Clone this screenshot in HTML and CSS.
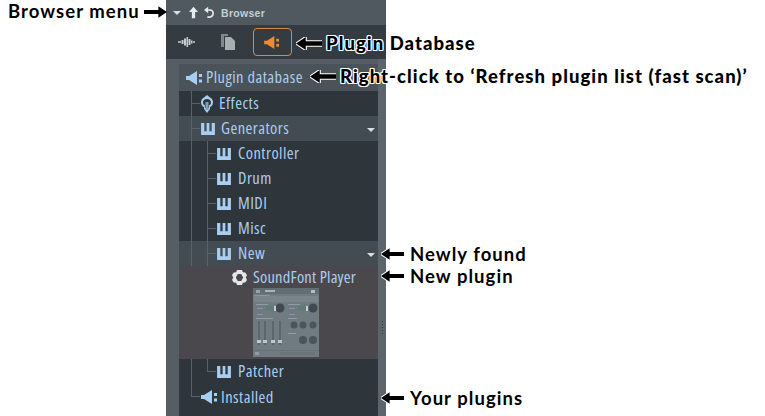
FILE: index.html
```html
<!DOCTYPE html>
<html lang="en">
<head>
<meta charset="utf-8">
<title>Browser plugin database</title>
<link rel="stylesheet" href="styles.css">
</head>
<body>
<svg class="defs" width="0" height="0" aria-hidden="true">
  <defs>
    <symbol id="plug" viewBox="0 0 18 14"><path d="M0 5H3L11 0V14L3 9H0Z"/><rect x="13" y="3" width="3" height="3"/><rect x="13" y="8.500" width="3" height="3"/></symbol>
    <symbol id="keys" viewBox="0 0 15 13"><path d="M0 0H3.500V9H6V0H9V9H11.500V0H15V13H0Z"/></symbol>
    <symbol id="arrow" viewBox="0 0 24 12"><path d="M0 6 9 0V4H24V8H9V12Z"/></symbol>
  </defs>
</svg>
<main class="panel">
  <header class="titlebar">
    <span class="caret title-caret"></span>
    <svg class="tb-icon" width="9" height="13" viewBox="0 0 11 14"><path d="M5.500 0 11 6.500H7.500V14H3.500V6.500H0Z"/></svg>
    <svg class="tb-icon" width="10" height="13" viewBox="0 0 12 14"><path d="M5 0V3H7.500C10 3 12 5 12 8S10 13.500 6.500 13.500H4V11.500H6.500C8.500 11.500 10 10 10 8S8.500 5 7 5H5V8L0 4Z"/></svg>
    <span class="title-text">Browser</span>
  </header>
  <nav class="tabs">
    <svg class="tab-wave" width="17" height="10" viewBox="0 0 17 10"><path d="M0 4.200H3V5.800H0ZM3.500 3H5.500V7H3.500ZM6 1.500H8V8.500H6ZM8.500 0H10V10H8.500ZM10.500 2H12.500V8H10.500ZM13 3.500H14.500V6.500H13ZM15 4.200H17V5.800H15Z"/></svg>
    <svg class="tab-files" width="14" height="16" viewBox="0 0 14 16"><path class="back" d="M0 0H7V2H3V13H0Z"/><path class="front" d="M4 3H10L14 7V16H4Z"/></svg>
    <div class="tab-active"><svg class="i-plug-o" width="17" height="13"><use href="#plug"/></svg></div>
  </nav>
  <div class="body">
    <div class="gutter"></div>
    <div class="tree">
      <div class="row root"><svg class="i-plug" width="18" height="14"><use href="#plug"/></svg><span>Plugin database</span></div>
      <div class="row dark l1 g1 branch1"><svg class="i-fx" width="12" height="18" viewBox="0 0 12 18"><path d="M6 0 9 2.500C11 3.500 12 5 12 7.500 12 10 10.500 11.500 9 12V14L6 18 3 14V12C1.500 11.500 0 10 0 7.500 0 5 1 3.500 3 2.500Z"/><path class="fx-in" d="M6 4C8.500 4 10 5.500 10 7.500 10 9 9 10 8 10.500V13H4V10.500C3 10 2 9 2 7.500 2 5.500 3.500 4 6 4Z"/><rect class="fx-core" x="4.500" y="7" width="3" height="8"/></svg><span>Effects</span></div>
      <div class="row light l1 g1 branch1"><svg class="i-keys" width="14" height="12"><use href="#keys"/></svg><span>Generators</span><i class="caret"></i></div>
      <div class="row dark l2 g2 branch2"><svg class="i-keys" width="14" height="12"><use href="#keys"/></svg><span>Controller</span></div>
      <div class="row dark l2 g2 branch2"><svg class="i-keys" width="14" height="12"><use href="#keys"/></svg><span>Drum</span></div>
      <div class="row dark l2 g2 branch2"><svg class="i-keys" width="14" height="12"><use href="#keys"/></svg><span>MIDI</span></div>
      <div class="row dark l2 g2 branch2"><svg class="i-keys" width="14" height="12"><use href="#keys"/></svg><span>Misc</span></div>
      <div class="row light l2 g2 branch2"><svg class="i-keys" width="14" height="12"><use href="#keys"/></svg><span>New</span><i class="caret"></i></div>
      <section class="selected">
        <div class="sf-name"><svg class="i-gear" width="15" height="15" viewBox="0 0 15 15"><path fill-rule="evenodd" d="M5 0H10L10.800 2.200 13.200 2.500 15 5 13.800 7.500 15 10 13.200 12.500 10.800 12.800 10 15H5L4.200 12.800 1.800 12.500 0 10 1.200 7.500 0 5 1.800 2.500 4.200 2.200ZM5.800 4 3.800 7.500 5.800 11H9.200L11.200 7.500 9.200 4Z"/></svg><span>SoundFont Player</span></div>
        <svg class="thumb" width="66" height="69" viewBox="0 0 66 69">
          <rect width="66" height="69" fill="#6f7b80"/>
          <rect y="0" width="66" height="6" fill="#636e72"/>
          <rect x="3" y="2" width="4" height="3" fill="#98a2a6"/><rect x="12" y="2" width="10" height="2" fill="#aab3b6"/><rect x="58" y="2" width="4" height="3" fill="#b5bdc0"/>
          <rect x="1" y="8" width="64" height="6" fill="#798589"/><rect x="1" y="7" width="16" height="1" fill="#8c969a"/>
          <rect x="3" y="16" width="12" height="1" fill="#929ca0"/><rect x="35" y="16" width="12" height="1" fill="#929ca0"/>
          <rect x="4" y="20" width="6" height="1" fill="#8c969a"/><rect x="36" y="20" width="6" height="1" fill="#8c969a"/>
          <rect x="13" y="18" width="8" height="5" fill="#5f7c75"/><rect x="45" y="18" width="8" height="5" fill="#5f7c75"/>
          <circle cx="27" cy="20" r="4.500" fill="#414a50"/><circle cx="60" cy="20" r="4.500" fill="#414a50"/><rect x="21" y="18" width="2" height="5" fill="#c8ced0"/><rect x="53" y="18" width="2" height="5" fill="#c8ced0"/>
          <rect x="4" y="26" width="6" height="1" fill="#8c969a"/><rect x="36" y="26" width="6" height="1" fill="#8c969a"/>
          <rect x="3" y="30" width="17" height="1" fill="#929ca0"/><rect x="35" y="30" width="9" height="1" fill="#929ca0"/><rect x="35" y="45" width="8" height="1" fill="#929ca0"/>
          <g fill="#4a545a"><rect x="5.500" y="33" width="1" height="24"/><rect x="11.500" y="33" width="1" height="24"/><rect x="19.500" y="33" width="1" height="24"/><rect x="26.500" y="33" width="1" height="24"/></g>
          <g fill="#bfc6c9"><rect x="4" y="52" width="4" height="3"/><rect x="10" y="52" width="4" height="3"/><rect x="18" y="52" width="4" height="3"/><rect x="25" y="52" width="4" height="3"/></g>
          <g fill="#4a545a"><circle cx="41" cy="37" r="3.500"/><circle cx="50" cy="37" r="3.500"/><circle cx="60" cy="37" r="3.500"/><circle cx="50" cy="52" r="4"/><circle cx="60" cy="52" r="4"/></g>
          <rect y="62" width="66" height="1" fill="#667277"/><rect x="27" y="64" width="35" height="3" fill="#687478"/><rect x="2" y="64" width="4" height="3" fill="#929ca0"/>
        </svg>
      </section>
      <div class="row dark l2 g1 branch2 end2"><svg class="i-keys" width="14" height="12"><use href="#keys"/></svg><span>Patcher</span></div>
      <div class="row dark l1b branch1 end1"><svg class="i-plug" width="18" height="14"><use href="#plug"/></svg><span>Installed</span></div>
      <div class="foot"></div>
    </div>
    <div class="scroll"><b></b><b></b><b></b><b></b><b></b></div>
  </div>
</main>

<p class="note plain n-menu">Browser menu</p>
<svg class="arrow a-menu" width="23" height="12"><use href="#arrow"/></svg>
<p class="note halo n-db">Plugin Database</p>
<svg class="arrow halo-a a-db" width="26" height="13"><use href="#arrow"/></svg>
<p class="note halo n-right">Right-click to ‘Refresh plugin list (fast scan)’</p>
<svg class="arrow halo-a a-right" width="26" height="13"><use href="#arrow"/></svg>
<p class="note plain n-found">Newly found</p>
<svg class="arrow halo-a a-found" width="23" height="12"><use href="#arrow"/></svg>
<p class="note plain n-new">New plugin</p>
<svg class="arrow halo-a a-new" width="23" height="12"><use href="#arrow"/></svg>
<p class="note plain n-yours">Your plugins</p>
<svg class="arrow halo-a a-yours" width="23" height="12"><use href="#arrow"/></svg>
</body>
</html>
```
FILE: styles.css
```css
* { box-sizing: border-box; }
html, body { margin: 0; height: 416px; overflow: hidden; background: #fff; }
body { position: relative; font-family: "Open Sans", sans-serif; }
.defs { position: absolute; }

.panel { width: 220px; height: 416px; margin-left: 166px; background: #555e64; display: flex; flex-direction: column; }
.titlebar { height: 25px; display: flex; align-items: center; background: #50595f; padding: 0 0 0 7px; flex: none; }
.tb-icon { fill: #e8ebec; }
.title-caret { margin-right: 8px; }
.tb-icon + .tb-icon { margin-left: 6px; }
.title-text { margin-left: 7px; font: 700 10.5px "Liberation Sans", sans-serif; letter-spacing: .3px; color: #c6ced2; }
.caret { width: 0; height: 0; border-left: 4px solid transparent; border-right: 4px solid transparent; border-top: 4px solid #d9dee0; display: block; }

.tabs { height: 34px; flex: none; background: #343c42; display: flex; align-items: center; padding-left: 12px; }
.tab-wave { fill: #c3cbcf; }
.tab-files { margin-left: 26px; }
.tab-files .back { fill: #7f888c; }
.tab-files .front { fill: #a9aeb0; }
.tab-active { width: 39px; height: 28px; margin-left: 18px; border: 1.5px solid #d5894a; border-radius: 4px; display: flex; align-items: center; justify-content: center; }
.i-plug-o { fill: #f08a32; }

.body { flex: 1; display: flex; min-height: 0; }
.gutter { width: 13px; background: #555e64; flex: none; }
.tree { width: 199px; padding-top: 5px; flex: none; display: flex; flex-direction: column; }
.scroll { flex: 1; background: #5c656b; display: flex; flex-direction: column; align-items: center; gap: 2px; padding-top: 262px; }
.scroll b { width: 1px; height: 1px; background: #343c42; }

.row { position: relative; height: 25px; flex: none; display: flex; align-items: center; gap: 6px; color: #a9cdf0; font-size: 16.500px; font-stretch: 75%; letter-spacing: .45px; white-space: nowrap; }
.row > span, .sf-name > span { margin-bottom: 2px; }
.row svg { fill: #a9cdf0; flex: none; }
.i-fx .fx-in { fill: #2e363c; }
.i-fx .fx-core { fill: #7f9fc0; }
.root { height: 27px; padding-left: 7px; background: #4a5359; gap: 2px; }
.root > span { margin-bottom: 3px; }
.dark { background: #2e363c; }
.light { background: #434c52; }
.l1 { padding-left: 22px; }
.l1b { padding-left: 22px; gap: 2px; }
.l1b > span { margin-bottom: 0; }
.l2 { padding-left: 38px; gap: 7px; }
.row .caret { position: absolute; right: 3px; top: 12px; }

.g1::before, .g2::before, .end1::before, .end2::before { content: ""; position: absolute; left: 12px; top: 0; bottom: 0; width: 1px; background: #57626a; }
.g2::after { content: ""; position: absolute; left: 28px; top: 0; bottom: 0; width: 1px; background: #57626a; }
.end1::before { bottom: 12px; }
.end2::after { content: ""; position: absolute; left: 28px; top: 0; height: 13px; width: 1px; background: #57626a; }
.branch1 > span:first-of-type::before, .branch2 > span:first-of-type::before { content: ""; position: absolute; top: 12px; height: 1px; background: #57626a; }
.branch1 > span:first-of-type::before { left: 12px; width: 9px; }
.branch2 > span:first-of-type::before { left: 28px; width: 9px; }

.selected { height: 93px; flex: none; background: #4b484d; display: flex; flex-direction: column; align-items: flex-start; padding: 0 0 0 53px; }
.sf-name { height: 22px; flex: none; display: flex; align-items: center; gap: 6px; color: #a9cdf0; font-size: 16.500px; font-stretch: 75%; letter-spacing: .2px; white-space: nowrap; }
.i-gear { fill: #e4e7e8; flex: none; }
.thumb { margin: 0 0 0 21px; flex: none; filter: blur(.6px); }
.foot { flex: 1; background: #2e363c; }

.note { position: absolute; margin: 0; white-space: nowrap; font-family: "Lato", sans-serif; font-weight: 700; font-size: 18.500px; letter-spacing: 1.05px; line-height: 22px; color: #000; }
.halo { font-weight: 900; text-shadow: 1px 0 #fff, -1px 0 #fff, 0 1px #fff, 0 -1px #fff, 1px 1px #fff, -1px -1px #fff, 1px -1px #fff, -1px 1px #fff; }
.arrow { position: absolute; fill: #000; overflow: visible; }
.a-menu { transform: scaleX(-1); }
.halo-a { stroke: #fff; stroke-width: 2px; paint-order: stroke; }
.n-menu { left: 8px; top: 0; }
.a-menu { left: 144px; top: 6px; }
.n-db { left: 326px; top: 32px; }
.a-db { left: 296px; top: 37px; }
.n-right { left: 340px; top: 65px; }
.a-right { left: 310px; top: 70px; }
.n-found { left: 410px; top: 243px; }
.a-found { left: 381px; top: 248px; }
.n-new { left: 410px; top: 265px; }
.a-new { left: 381px; top: 270px; }
.n-yours { left: 410px; top: 387px; }
.a-yours { left: 381px; top: 392px; }
```
